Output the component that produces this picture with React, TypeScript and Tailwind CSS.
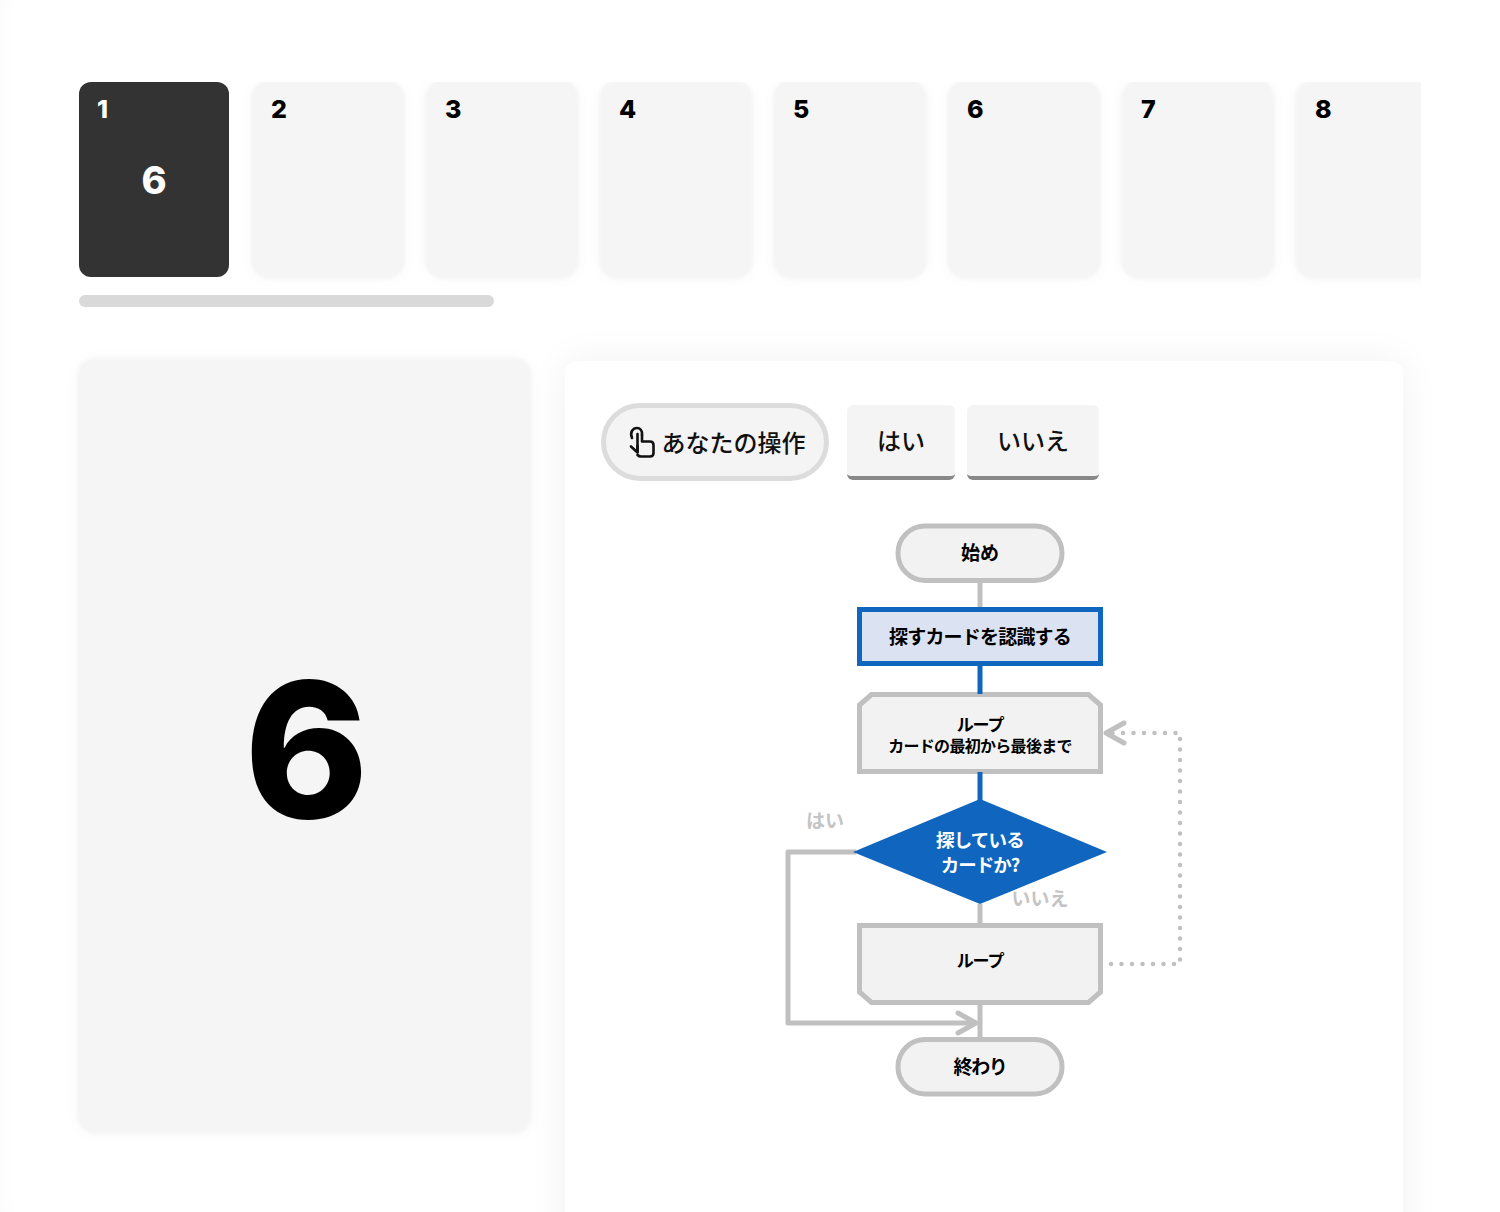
import React from "react";

const digitFont = "font-['Inter','Liberation_Sans',sans-serif]";
const jpFont = "'Noto Sans CJK JP', sans-serif";
const cards = [2, 3, 4, 5, 6, 7, 8];

const Card = ({ n }: { n: number }) => (
  <div className="relative h-[195px] w-[150px] shrink-0 rounded-2xl bg-[#f5f5f5] shadow-[0_0_3px_2px_#f6f6f6,0_0_18px_rgba(0,0,0,0.035)]">
    <span className="absolute left-[18px] top-[12px] text-[25px] leading-[30px] font-extrabold text-black">{n}</span>
  </div>
);

const HandIcon = () => (
  <svg width="28" height="33" viewBox="0 0 28 33" fill="none" stroke="#111" strokeWidth="2.6" strokeLinecap="round" strokeLinejoin="round" className="shrink-0">
    <path d="M4 12C1.5 6 5 2 9 2C12 2 14.5 4.5 14 9" />
    <path d="M9.5 8V26" />
    <path d="M14 9V15.5H22Q25.5 15.5 25.5 19V27Q25.5 30.5 22 30.5H13Q11 30.5 9.5 29" />
    <path d="M3 20.5L9.5 26.5L9.5 20" />
  </svg>
);

const Chart = () => {
  const gray = "#c0c0c0";
  const blue = "#1066be";
  const fill = "#f2f2f2";
  return (
    <svg width="410" height="590" viewBox="779 515 410 590" fill="none" className="mx-auto mt-[34px] block" style={{ fontFamily: jpFont }}>
      <g stroke={gray} strokeWidth="5">
        <path d="M980 580V610M980 904V926M980 1003V1040" />
        <rect x="898" y="526" width="164" height="54.5" rx="27" fill={fill} />
        <rect x="898" y="1039.5" width="164" height="54.5" rx="27" fill={fill} />
        <path d="M859.5 705L871.5 694.5H1088.5L1100.5 705V771.5H859.5Z" fill={fill} />
        <path d="M859.5 925.5H1100.5V992L1088.5 1002.5H871.5L859.5 992Z" fill={fill} />
        <path d="M856 852H788V1023H975" strokeLinejoin="round" />
        <path d="M958 1013L976 1023L958 1033" strokeLinecap="round" strokeLinejoin="round" />
        <path d="M1124 723L1106 733L1124 743" strokeLinecap="round" strokeLinejoin="round" />
        <path d="M1111 964H1180V733H1110" strokeWidth="4.5" strokeLinecap="round" strokeDasharray="0 10.5" />
      </g>
      <path d="M980 664V694M980 772V802" stroke={blue} strokeWidth="5" />
      <rect x="859.5" y="609.5" width="241" height="54" fill="#dbe2f2" stroke={blue} strokeWidth="5" />
      <path d="M853 852L980 799L1107 852L980 904Z" fill={blue} />
      <g textAnchor="middle" fontWeight="700" fill="#000">
        <text x="980" y="560" fontSize="19">始め</text>
        <text x="980" y="644" fontSize="19" letterSpacing="-0.8">探すカードを認識する</text>
        <text x="980" y="731" fontSize="17" letterSpacing="-1.2">ループ</text>
        <text x="980" y="752" fontSize="16" letterSpacing="-0.7">カードの最初から最後まで</text>
        <text x="980" y="967" fontSize="17" letterSpacing="-1.2">ループ</text>
        <text x="980" y="1074" fontSize="19" letterSpacing="-1.3">終わり</text>
        <text x="980" y="847" fontSize="18.5" letterSpacing="-0.8" fill="#fff">探している</text>
        <text x="980" y="872" fontSize="18.5" letterSpacing="-1" fill="#fff">カードか?</text>
        <text x="825" y="828" fontSize="19" fill="#c4c4c4">はい</text>
        <text x="1040" y="906" fontSize="19" fill="#c4c4c4">いいえ</text>
      </g>
    </svg>
  );
};

export default function App() {
  return (
    <div className={`h-[1212px] overflow-hidden bg-white px-[79px] pt-[82px] shadow-[inset_14px_0_20px_-14px_rgba(0,0,0,0.03)] ${digitFont}`}>
      <div className="flex h-[213px] w-[1342px] gap-6 overflow-hidden">
        <div className="relative h-[195px] w-[150px] shrink-0 rounded-xl bg-[#333333] text-white">
          <span className="absolute left-[18px] top-[12px] text-[25px] leading-[30px] font-extrabold">1</span>
          <div className="flex h-full items-center justify-center pt-[2px] text-[38px] font-extrabold">6</div>
        </div>
        {cards.map((n) => (
          <Card key={n} n={n} />
        ))}
      </div>
      <div className="h-3 w-[415px] rounded-md bg-[#d9d9d9]" />

      <div className="mt-[53px] flex items-start gap-[35px]">
        <div className="flex h-[772px] w-[451px] shrink-0 items-center justify-center rounded-2xl bg-[#f5f5f5] pt-[8px] pl-[4px] text-[188px] font-extrabold text-black shadow-[0_0_3px_2px_#f6f6f6,0_0_18px_rgba(0,0,0,0.035)]">
          6
        </div>
        <div className="mt-px h-[900px] w-[838px] rounded-xl bg-white px-9 pt-[42px] shadow-[0_0_40px_rgba(0,0,0,0.06)]" style={{ fontFamily: jpFont }}>
          <div className="flex items-center">
            <div className="flex h-[78px] w-[228px] items-center justify-center gap-[6px] rounded-full border-[5px] border-[#dcdcdc] bg-[#f4f4f4] pl-[3px] text-[24px] font-medium text-[#111]">
              <HandIcon />
              <span>あなたの操作</span>
            </div>
            <button className="ml-[18px] h-[75px] w-[108px] rounded-md border-b-4 border-[#888888] bg-[#f4f4f4] text-[24px] font-medium text-[#111]">はい</button>
            <button className="ml-3 h-[75px] w-[132px] rounded-md border-b-4 border-[#888888] bg-[#f4f4f4] text-[24px] font-medium text-[#111]">いいえ</button>
          </div>
          <Chart />
        </div>
      </div>
    </div>
  );
}
